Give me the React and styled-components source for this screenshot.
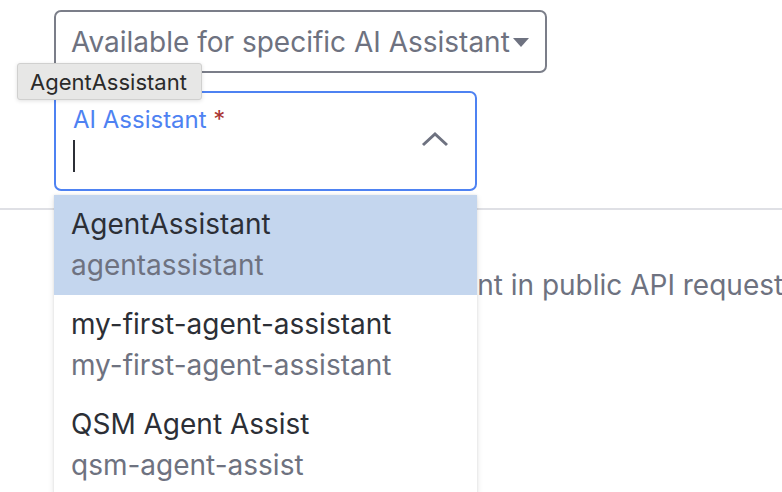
import React from "react";
import styled, { createGlobalStyle } from "styled-components";

const GlobalStyle = createGlobalStyle`
  html, body {
    margin: 0;
    padding: 0;
    background: #ffffff;
    font-family: Inter, "Noto Sans", sans-serif;
  }
`;

const Page = styled.div`
  position: relative;
  width: 782px;
  height: 492px;
  overflow: hidden;
  padding: 10px 0 0 54px;
  box-sizing: border-box;
`;

const Select = styled.div`
  width: 493px;
  height: 63px;
  box-sizing: border-box;
  border: 2px solid #7b7e89;
  border-radius: 7px;
  display: flex;
  align-items: center;
  justify-content: space-between;
  padding: 0 16px 0 15px;
  font-size: 28px;
  color: #6e7280;
`;

const Caret = styled.span`
  width: 0;
  height: 0;
  border-left: 8px solid transparent;
  border-right: 8px solid transparent;
  border-top: 9px solid #6e7280;
  margin-top: 2px;
`;

const Field = styled.div`
  margin-top: 18px;
  width: 423px;
  height: 100px;
  box-sizing: border-box;
  border: 2px solid #4e82f2;
  border-radius: 7px;
  display: flex;
  align-items: center;
  justify-content: space-between;
  padding: 0 26px 0 17px;
`;

const FieldBody = styled.div`
  display: flex;
  flex-direction: column;
  gap: 5px;
  margin-top: -5px;
`;

const Label = styled.span`
  font-size: 24px;
  line-height: 30px;
  color: #4e82f2;
  strong {
    font-weight: 400;
    color: #a93532;
  }
`;

const Cursor = styled.span`
  width: 2px;
  height: 32px;
  background: #2c2f36;
`;

const Chevron = styled.svg`
  margin-top: -5px;
`;

const Divider = styled.div`
  margin-top: 17px;
  margin-left: -54px;
  width: 782px;
  height: 2px;
  background: #dfe0e5;
`;

const Hint = styled.p`
  margin: 58px 0 0 ${({ $indent }) => $indent}px;
  white-space: nowrap;
  font-size: 28px;
  color: #6e7280;
`;

const Tooltip = styled.div`
  position: absolute;
  left: 17px;
  top: 63px;
  width: 185px;
  height: 37px;
  padding: 0 0 0 12px;
  box-sizing: border-box;
  display: flex;
  align-items: center;
  background: #e7e7e6;
  border: 1px solid #d0d0cf;
  border-radius: 3px;
  box-shadow: 0 1px 4px rgba(0, 0, 0, 0.12);
  font-size: 22px;
  color: #2a2a2a;
`;

const Menu = styled.ul`
  position: absolute;
  left: 54px;
  top: 195px;
  width: 423px;
  margin: 0;
  padding: 0;
  list-style: none;
  background: #ffffff;
  box-shadow: 0 2px 6px rgba(0, 0, 0, 0.12), 0 0 2px rgba(0, 0, 0, 0.08);
`;

const Option = styled.li`
  height: 100px;
  box-sizing: border-box;
  padding: 12px 17px 0;
  display: flex;
  flex-direction: column;
  gap: 7px;
  background: ${({ $active }) => ($active ? "#c4d6ee" : "#ffffff")};
`;

const OptionTitle = styled.span`
  font-size: 28px;
  line-height: 34px;
  color: #2c2f36;
`;

const OptionSub = styled.span`
  font-size: 28px;
  line-height: 34px;
  color: #6e7280;
`;

const options = [
  { name: "AgentAssistant", id: "agentassistant" },
  { name: "my-first-agent-assistant", id: "my-first-agent-assistant" },
  { name: "QSM Agent Assist", id: "qsm-agent-assist" },
];

const ChevronUp = () => (
  <Chevron width="28" height="16" viewBox="0 0 28 16" fill="none">
    <path d="M2 14 L14 3 L26 14" stroke="#6e7280" strokeWidth="3" />
  </Chevron>
);

export default function App() {
  return (
    <>
      <GlobalStyle />
      <Page>
        <Select>
          <span>Available for specific AI Assistant</span>
          <Caret />
        </Select>
        <Field>
          <FieldBody>
            <Label>
              AI Assistant <strong>*</strong>
            </Label>
            <Cursor />
          </FieldBody>
          <ChevronUp />
        </Field>
        <Divider />
        <Hint $indent={178}>Use this AI Assistant in public API requests</Hint>
        <Tooltip>AgentAssistant</Tooltip>
        <Menu>
          {options.map((opt, i) => (
            <Option key={opt.id} $active={i === 0}>
              <OptionTitle>{opt.name}</OptionTitle>
              <OptionSub>{opt.id}</OptionSub>
            </Option>
          ))}
        </Menu>
      </Page>
    </>
  );
}
